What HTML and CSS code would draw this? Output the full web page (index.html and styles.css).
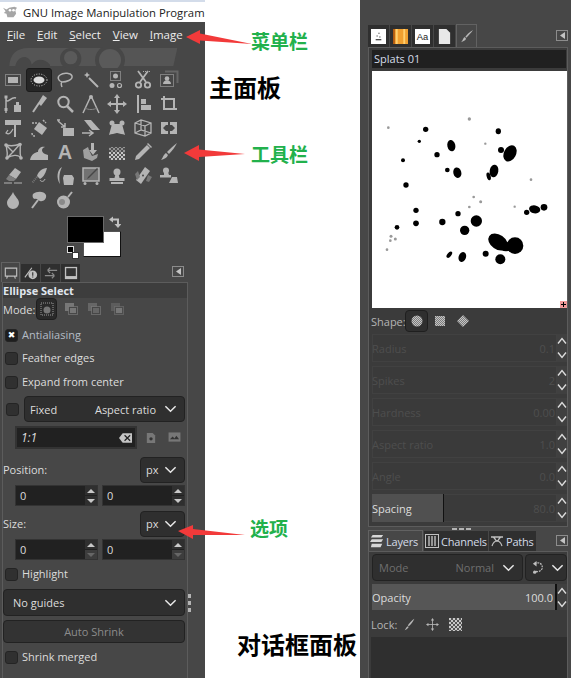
FILE: index.html
```html
<!DOCTYPE html>
<html lang="en">
<head>
  <meta charset="UTF-8">
  <meta name="viewport" content="width=device-width, initial-scale=1.0">
  <title>GIMP windows</title>
  <link rel="stylesheet" href="styles.css">
</head>
<body>
  <svg class="defs" width="0" height="0">
    <defs>
      <pattern id="check" width="4" height="4" patternUnits="userSpaceOnUse">
        <rect width="4" height="4" fill="#555"/>
        <rect width="2" height="2" fill="#c8c8c8"/>
        <rect x="2" y="2" width="2" height="2" fill="#c8c8c8"/>
      </pattern>
      <pattern id="fine" width="2" height="2" patternUnits="userSpaceOnUse">
        <rect width="2" height="2" fill="#7c7c7c"/>
        <rect width="1" height="1" fill="#c4c4c4"/>
        <rect x="1" y="1" width="1" height="1" fill="#c4c4c4"/>
      </pattern>
      <symbol id="chev" viewBox="0 0 14 8"><path d="M1.5 1 7 6.5 12.5 1" fill="none" stroke="#e8e8e8" stroke-width="1.6"/></symbol>
      <symbol id="up" viewBox="0 0 10 8"><path d="M1 6.5 5 1.5 9 6.5" fill="none" stroke="#dcdcdc" stroke-width="1.4"/></symbol>
      <symbol id="down" viewBox="0 0 10 8"><path d="M1 1.5 5 6.5 9 1.5" fill="none" stroke="#dcdcdc" stroke-width="1.4"/></symbol>
      <symbol id="dockmenu" viewBox="0 0 12 11"><rect width="12" height="11" fill="#8c8c8c"/><rect x="1" y="1" width="10" height="9" fill="#474747"/><path d="M9 2v7L4 5.5z" fill="#c4c4c4"/></symbol>
    </defs>
  </svg>

  <main class="desk">
    <section class="toolbox">
      <div class="strip"></div>
      <div class="titlebar">
        <svg class="wilber" viewBox="0 0 18 16"><path d="M1 3l4 2 3-2 6-1 3 1-2 3 1 4-3 4H6l-1-4-3-1 2-2z" fill="#a6a6a6"/><circle cx="9" cy="6" r="1.5" fill="#fff"/><circle cx="13" cy="6" r="1.5" fill="#fff"/></svg>
        <span>GNU Image Manipulation Program</span>
      </div>
      <nav class="menubar">
        <span><u>F</u>ile</span><span><u>E</u>dit</span><span><u>S</u>elect</span><span><u>V</u>iew</span><span><u>I</u>mage</span>
      </nav>
      <div class="logo">
        <!-- faint wilber behind the tool grid -->
        <svg viewBox="0 9 570 63">
          <path d="M28 66C30 30 50 12 85 12H532L520 66z" fill="#555"/>
          <path d="M45 72C50 30 90 30 95 62 110 40 135 45 150 62V72z" fill="#474747"/>
          <circle cx="212" cy="44" r="32" fill="#474747"/>
          <circle cx="212" cy="41" r="20" fill="#5a5a5a"/>
          <circle cx="330" cy="48" r="45" fill="#474747"/>
          <circle cx="330" cy="48" r="33" fill="#5a5a5a"/>
        </svg>
      </div>
      <div class="tools">
        <div class="tool"><svg viewBox="0 0 20 20"><rect x="2.5" y="4.5" width="15" height="11" fill="none" stroke="#bbb" stroke-dasharray="1 1"/><rect x="5" y="7" width="10" height="6"/></svg></div>
        <div class="tool on"><svg viewBox="0 0 20 20"><ellipse cx="10" cy="10" rx="8" ry="6" fill="none" stroke="#ccc" stroke-dasharray="1 1.5"/><ellipse cx="10" cy="10" rx="5.5" ry="3.5" fill="#ddd"/></svg></div>
        <div class="tool"><svg viewBox="0 0 20 20"><path d="M7 12c-4-1-5-5-2-7 4-3 11-2 12 1 1 4-6 6-10 6-1 0-1 3 0 5" fill="none" stroke="#b4b4b4" stroke-width="1.5"/></svg></div>
        <div class="tool"><svg viewBox="0 0 20 20"><path d="M8 8l9 9" stroke="#b4b4b4" stroke-width="2"/><path d="M6 2l1 2 2 1-2 1-1 2-1-2-2-1 2-1z"/></svg></div>
        <div class="tool"><svg viewBox="0 0 20 20"><rect x="3.5" y="1.5" width="10" height="9" fill="none" stroke="#bbb" stroke-dasharray="1 1"/><circle cx="8.5" cy="6" r="2.5"/><circle cx="5" cy="15.5" r="2.5"/><circle cx="12.5" cy="15.5" r="2" fill="none" stroke="#b4b4b4" stroke-width="1.2"/></svg></div>
        <div class="tool"><svg viewBox="0 0 20 20"><path d="M5 1l8 11M15 1L7 12" stroke="#b4b4b4" stroke-width="1.8"/><circle cx="5.5" cy="15" r="2.7" fill="none" stroke="#b4b4b4" stroke-width="1.8"/><circle cx="14.5" cy="15" r="2.7" fill="none" stroke="#b4b4b4" stroke-width="1.8"/><path d="M10 1.5h8" stroke="#aaa" stroke-dasharray="1 1"/></svg></div>
        <div class="tool"><svg viewBox="0 0 20 20"><path d="M6 1.5h12.5V13" fill="none" stroke="#666" stroke-width="2"/><rect x="1.5" y="4.5" width="13" height="12" fill="none" stroke="#bbb" stroke-dasharray="1 1"/><circle cx="8" cy="8.5" r="2.3"/><path d="M4 14c0-5 8-5 8 0z"/></svg></div>

        <div class="tool"><svg viewBox="0 0 20 20"><path d="M3 3v16M3 5c1 6 5-3 10-1" fill="none" stroke="#b4b4b4" stroke-width="1.5"/><rect x="1.5" y="1.5" width="3" height="3"/><rect x="1.5" y="14" width="3" height="3"/><path d="M11 11h7v7h-7zM13 8h3v3h-3z"/></svg></div>
        <div class="tool"><svg viewBox="0 0 20 20"><path d="M14 1l4 3-6 8-3-3z"/><path d="M10 9L4 18" stroke="#b4b4b4" stroke-width="2"/></svg></div>
        <div class="tool"><svg viewBox="0 0 20 20"><circle cx="8.5" cy="8" r="5.2" fill="none" stroke="#b4b4b4" stroke-width="2"/><path d="M12 12l6 6" stroke="#b4b4b4" stroke-width="2.5"/></svg></div>
        <div class="tool"><svg viewBox="0 0 20 20"><circle cx="10" cy="3" r="2"/><path d="M9 4L2 19M11 4l7 15" stroke="#b4b4b4" stroke-width="1.5"/><path d="M4 14c3 2 9 2 12 0" fill="none" stroke="#888"/></svg></div>
        <div class="tool"><svg viewBox="0 0 20 20"><path d="M10 2v16M2 10h16" stroke="#b4b4b4" stroke-width="2"/><path d="M10 0l3 4H7zM10 20l-3-4h6zM0 10l4-3v6zM20 10l-4 3V7z"/></svg></div>
        <div class="tool"><svg viewBox="0 0 20 20"><path d="M4 1h2v18H4zM8 5h5v5H8zM8 11h10v5H8z"/></svg></div>
        <div class="tool"><svg viewBox="0 0 20 20"><path d="M5 2v13h13" fill="none" stroke="#b4b4b4" stroke-width="2"/><path d="M2 5h13v10" fill="none" stroke="#b4b4b4" stroke-width="2"/></svg></div>

        <div class="tool"><svg viewBox="0 0 20 20"><path d="M2 2h16v5h-5v12h-2V7H2z"/><path d="M3 15c3 2 5 0 7-4M5 12l-2 3 3 1" fill="none" stroke="#b4b4b4" stroke-width="1.2"/></svg></div>
        <div class="tool"><svg viewBox="0 0 20 20"><path d="M10 4l8 6-5 7-8-6z"/><path d="M3 5h5M14 2l3 3M3 15c0 2 1 3 3 3" fill="none" stroke="#b4b4b4" stroke-width="1.5" stroke-dasharray="2 1"/></svg></div>
        <div class="tool"><svg viewBox="0 0 20 20"><path d="M8 10h11v8H8z"/><path d="M2 2h3M3 3l7 6M10 5v4H6" fill="none" stroke="#b4b4b4" stroke-width="1.5"/></svg></div>
        <div class="tool"><svg viewBox="0 0 20 20"><path d="M3 2h7l9 10H11z"/><path d="M1 15h10M8 12l4 3-4 3" fill="none" stroke="#b4b4b4" stroke-width="1.5"/></svg></div>
        <div class="tool"><svg viewBox="0 0 20 20"><path d="M5 6h10l3 11c-5-2-11-2-16 0z"/><circle cx="5" cy="5" r="2.5"/><circle cx="15" cy="5" r="2.5"/><circle cx="10" cy="17" r="2" fill="#474747"/></svg></div>
        <div class="tool"><svg viewBox="0 0 20 20"><path d="M2 5l6-3 10 3v10l-6 3L2 15zM2 5l10 3v10M12 8l6-3M8 2v10M2 15l6-3 10 3" fill="none" stroke="#b4b4b4" stroke-width="1.3"/></svg></div>
        <div class="tool"><svg viewBox="0 0 20 20"><path d="M2 4h7v3H7L4 10l3 3h2v3H2zM18 4h-7v3h2l3 3-3 3h-2v3h7z"/></svg></div>

        <div class="tool"><svg viewBox="0 0 20 20"><path d="M3 3c4 1 9 1 14-1 1 5-1 8 1 14-3-4-9-3-14 0 1-5 0-8-1-13zM3 3l7 7-6 6M17 2l-7 8" fill="none" stroke="#b4b4b4" stroke-width="1.4"/><circle cx="3" cy="3" r="1.8"/><circle cx="17" cy="2.5" r="1.8"/><circle cx="4" cy="16" r="1.8"/><circle cx="18" cy="16" r="1.8"/></svg></div>
        <div class="tool"><svg viewBox="0 0 20 20"><path d="M1 18c1-6 6-8 8-8 0-4 4-6 7-5-4 1-4 5 0 7l3 1v5z"/></svg></div>
        <div class="tool tool-a">A</div>
        <div class="tool"><svg viewBox="0 0 20 20"><path d="M10 1h3v7h3l-4 5-4-5h2z"/><path d="M2 8l5-3 1 3 3 6 6-2-1 4-5 3-8-3z" fill="#a0a0a0"/></svg></div>
        <div class="tool"><svg viewBox="0 0 20 20"><rect x="2" y="5" width="16" height="6" fill="url(#check)" opacity=".6"/><rect x="2" y="10" width="16" height="8" fill="url(#check)"/></svg></div>
        <div class="tool"><svg viewBox="0 0 20 20"><path d="M14 3l3 3L6 17l-4 1 1-4z"/><path d="M15 1l4 4-1 1-4-4z"/></svg></div>
        <div class="tool"><svg viewBox="0 0 20 20"><path d="M18 1c-2 4-5 8-8 11l-2-2c3-3 6-6 10-9z"/><path d="M7 11l2 2c-1 3-4 4-7 5 2-2 2-5 5-7z"/></svg></div>

        <div class="tool"><svg viewBox="0 0 20 20"><path d="M12 2l6 4-5 7-7-4z"/><path d="M6 9l7 4-2 2H6l-3-2z" fill="#7d7d7d"/><path d="M1 17h8M11 17h8" stroke="#b4b4b4"/></svg></div>
        <div class="tool"><svg viewBox="0 0 20 20"><path d="M18 2c-5 0-9 4-10 8l3 3c3-2 5-4 7-11z"/><path d="M8 11l-5 6" stroke="#777" stroke-width="2" stroke-dasharray="1 1"/><path d="M11 14c1 2 4 2 5-1" fill="none" stroke="#b4b4b4"/></svg></div>
        <div class="tool"><svg viewBox="0 0 20 20"><path d="M7 1C2 4 1 12 5 18 4 12 4 7 7 1z"/><path d="M9 9h8l2 3-1 7H9l-1-7z"/></svg></div>
        <div class="tool"><svg viewBox="0 0 20 20"><path d="M2 2h16v13H2z" fill="none" stroke="#b4b4b4" stroke-width="1.5"/><path d="M2 2h16v13H2z" opacity=".4"/><path d="M17 3L8 12l-2 1 1-2 9-9z" fill="#474747"/><circle cx="4" cy="17.5" r="1.5"/><circle cx="16" cy="17.5" r="1.5"/></svg></div>
        <div class="tool"><svg viewBox="0 0 20 20"><circle cx="10" cy="6" r="3.5"/><path d="M8.5 8h3l1 4h5v3h-15v-3h5zM4 16h12v2H4z"/></svg></div>
        <div class="tool"><svg viewBox="0 0 20 20"><path d="M12 1l5 4-9 13-5-4z"/><path d="M2 8l3-3 2 6-3 3zM15 9l4 2-3 5-3-1z" fill="#777"/><circle cx="10" cy="9.5" r="1" fill="#474747"/></svg></div>
        <div class="tool"><svg viewBox="0 0 20 20"><circle cx="7" cy="4.5" r="3"/><path d="M5 6h4l1 3h2v2.5H1V9h4zM10 17l3-6h5l1 6z"/></svg></div>

        <div class="tool"><svg viewBox="0 0 20 20"><path d="M10 2c2 5 6 7 6 11a6 6 0 0 1-12 0c0-4 4-6 6-11z"/></svg></div>
        <div class="tool"><svg viewBox="0 0 20 20"><path d="M4 4c4-3 11-3 13 1 1 4-3 7-6 6-2 0-3-3-5-2-2 0-3-3-2-5z"/><path d="M9 10l-6 8" stroke="#b4b4b4" stroke-width="2"/></svg></div>
        <div class="tool"><svg viewBox="0 0 20 20"><circle cx="8.5" cy="12" r="6.5"/><path d="M13 7l4-5" stroke="#b4b4b4" stroke-width="2"/><circle cx="7" cy="12" r="3" fill="#8a8a8a"/></svg></div>
      </div>

      <div class="colors">
        <div class="swatches">
          <div class="bg-color"></div>
          <div class="fg-color"></div>
          <svg class="swap" viewBox="0 0 12 12"><path d="M3 3.5h6V8" fill="none" stroke="#c0c0c0" stroke-width="2"/><path d="M0 3.5 4 .5v6zM9 12 5.5 8h7z" fill="#c0c0c0"/></svg>
          <div class="mini-fg"></div>
          <div class="mini-bg"></div>
        </div>
      </div>

      <div class="tabs">
        <div class="tab active"><svg viewBox="0 0 16 16"><path d="M1.5 2.5h13v9h-13zM4 11.5l-1 3M12 11.5l1 3" fill="none" stroke="#c0c0c0" stroke-width="1.3"/></svg></div>
        <div class="tab"><svg viewBox="0 0 16 16"><path d="M1 13L9 2" stroke="#c0c0c0" stroke-width="1.3"/><circle cx="10" cy="10" r="5" fill="#c0c0c0"/><path d="M10 7v4M10 12v1" stroke="#333" stroke-width="1.3"/></svg></div>
        <div class="tab"><svg viewBox="0 0 16 16"><path d="M15 5H4M4 5l3-3M4 5l3 3M1 11h11M12 11l-3-3M12 11l-3 3" fill="none" stroke="#8a8a8a" stroke-width="1.4"/></svg></div>
        <div class="tab"><svg viewBox="0 0 16 16"><rect x="1" y="1" width="14" height="14" fill="#c0c0c0"/><rect x="2.5" y="2.5" width="11" height="9" fill="#333"/></svg></div>
        <svg class="dock-btn"><use href="#dockmenu"/></svg>
      </div>

      <section class="options">
        <h4 class="opt-title">Ellipse Select</h4>
        <div class="mode-row">
          <span>Mode:</span>
          <div class="mode-btn on"><svg viewBox="0 0 14 14"><rect x="1" y="1" width="12" height="12" fill="none" stroke="#999" stroke-dasharray="1 1"/><circle cx="7" cy="8" r="3.5" fill="#777"/></svg></div>
          <div class="mode-btn"><svg viewBox="0 0 14 14"><rect x="1" y="1" width="9" height="8" fill="#777"/><rect x="4.5" y="4.5" width="9" height="8" fill="#474747" stroke="#8c8c8c" stroke-dasharray="1 1"/><rect x="6" y="6" width="6" height="5" fill="#777"/></svg></div>
          <div class="mode-btn"><svg viewBox="0 0 14 14"><rect x="1" y="1" width="9" height="8" fill="#666"/><rect x="4.5" y="4.5" width="9" height="8" fill="#474747" stroke="#8c8c8c" stroke-dasharray="1 1"/><rect x="6" y="6" width="6" height="5" fill="#666"/></svg></div>
          <div class="mode-btn"><svg viewBox="0 0 14 14"><rect x="1" y="1" width="9" height="8" fill="#5c5c5c"/><rect x="4.5" y="4.5" width="9" height="8" fill="#4c4c4c" stroke="#7a7a7a" stroke-dasharray="1 1"/><rect x="6" y="6" width="6" height="5" fill="#777"/></svg></div>
        </div>

        <label class="check-row first"><span class="check marked">✖</span><span class="dim">Antialiasing</span></label>
        <label class="check-row feather"><span class="check"></span>Feather edges</label>
        <label class="check-row expand"><span class="check"></span>Expand from center</label>

        <div class="fixed-row">
          <span class="check"></span>
          <div class="combo grow"><span>Fixed</span><span class="right">Aspect ratio</span><svg class="chev"><use href="#chev"/></svg></div>
        </div>

        <div class="ratio-row">
          <div class="entry">
            <em>1:1</em>
            <svg class="clear" viewBox="0 0 14 10"><path d="M4 0h10v10H4L0 5z" fill="#c4c4c4"/><path d="M6 2l6 6M12 2L6 8" stroke="#222" stroke-width="1.3"/></svg>
          </div>
          <svg class="mini-ico" viewBox="0 0 12 14"><path d="M1 1h7l3 3v9H1z" fill="#777"/><circle cx="6" cy="8" r="2" fill="#333"/></svg>
          <svg class="mini-ico wide" viewBox="0 0 14 12"><rect x=".5" y=".5" width="13" height="10" fill="#777"/><path d="M2 8l3-3 2 2 2-3 3 4z" fill="#333"/></svg>
        </div>

        <div class="unit-row"><span>Position:</span><div class="combo unit">px<svg class="chev"><use href="#chev"/></svg></div></div>
        <div class="spin-row">
          <div class="spin"><span>0</span><div class="steps"><i class="up"></i><i class="dn"></i></div></div>
          <div class="spin"><span>0</span><div class="steps"><i class="up"></i><i class="dn"></i></div></div>
        </div>
        <div class="unit-row size"><span>Size:</span><div class="combo unit">px<svg class="chev"><use href="#chev"/></svg></div></div>
        <div class="spin-row">
          <div class="spin"><span>0</span><div class="steps"><i class="up"></i><i class="dn off"></i></div></div>
          <div class="spin"><span>0</span><div class="steps"><i class="up"></i><i class="dn off"></i></div></div>
        </div>

        <label class="check-row hl"><span class="check"></span>Highlight</label>
        <div class="combo guides">No guides<svg class="chev"><use href="#chev"/></svg></div>
        <button class="shrink" type="button">Auto Shrink</button>
        <label class="check-row merged"><span class="check"></span>Shrink merged</label>
      </section>
    </section>

    <div class="pane-grip"><i></i><i></i><i></i></div>

    <section class="docks">
      <div class="strip right"></div>
      <div class="tabs top">
        <div class="tab thumb"><svg viewBox="0 0 16 16"><rect width="16" height="16" fill="#fff"/><path d="M8 4h1v1H8zM6 7h1v1H6zM9 8h1v1H9zM5 11h6v1H5z" fill="#111"/></svg></div>
        <div class="tab thumb"><svg viewBox="0 0 16 16"><rect width="16" height="16" fill="#f0a030"/><path d="M3 0h2v16H3zM11 0h2v16h-2z" fill="#ffd070"/><path d="M0 0h2v16H0z" fill="#b05a10"/></svg></div>
        <div class="tab thumb"><svg viewBox="0 0 16 16"><rect width="16" height="16" fill="#fff"/><text class="aa" x="8" y="12" text-anchor="middle">Aa</text></svg></div>
        <div class="tab thumb"><svg viewBox="0 0 16 16"><path d="M2 0h8l4 4v12H2z" fill="#e8e8e8"/></svg></div>
        <div class="tab active wide"><svg viewBox="0 0 16 16"><path d="M15 1C12 5 9 8 7 10L6 9c2-3 5-6 9-8z" fill="#b8b8b8"/><path d="M5 9l2 2c-1 2-3 3-6 4 2-1 2-4 4-6z" fill="#b8b8b8"/></svg></div>
        <svg class="dock-btn"><use href="#dockmenu"/></svg>
      </div>

      <section class="dock brushes">
        <div class="name-entry">Splats 01</div>
        <div class="preview">
          <svg viewBox="36 213 585 711">
            <g fill="#999">
              <circle cx="85" cy="383" r="4"/><circle cx="328" cy="357" r="5"/><circle cx="376" cy="431" r="3.5"/><circle cx="513" cy="539" r="4"/><circle cx="341" cy="591" r="4"/><circle cx="362" cy="605" r="4.5"/><circle cx="328" cy="621" r="4"/><circle cx="464" cy="620" r="3.5"/><circle cx="93" cy="709" r="4.5"/><circle cx="106" cy="717" r="4.5"/><circle cx="91" cy="722" r="4"/><circle cx="81" cy="749" r="4"/>
            </g>
            <g fill="#000">
              <circle cx="197" cy="388" r="8"/><ellipse cx="415" cy="394" rx="8" ry="9"/><circle cx="178" cy="424" r="5"/><ellipse cx="274" cy="437" rx="12" ry="17" transform="rotate(-12 274 437)"/><circle cx="231" cy="464" r="8"/><circle cx="129" cy="481" r="6"/><circle cx="423" cy="450" r="9"/><ellipse cx="450" cy="460" rx="18" ry="26" transform="rotate(28 450 460)"/><circle cx="262" cy="510" r="7"/><ellipse cx="292" cy="518" rx="12" ry="16" transform="rotate(-15 292 518)"/><ellipse cx="402" cy="513" rx="13" ry="19" transform="rotate(10 402 513)"/><ellipse cx="386" cy="529" rx="6" ry="12" transform="rotate(-15 386 529)"/><circle cx="138" cy="555" r="8"/><circle cx="168" cy="631" r="8"/><circle cx="168" cy="670" r="8.5"/><circle cx="111" cy="682" r="7"/><circle cx="247" cy="666" r="9.5"/><circle cx="294" cy="641" r="8"/><circle cx="349" cy="663" r="17"/><circle cx="314" cy="691" r="14"/><circle cx="500" cy="637" r="8"/><ellipse cx="524" cy="628" rx="17" ry="12" transform="rotate(10 524 628)"/><circle cx="552" cy="622" r="10"/><circle cx="377" cy="761" r="9"/><circle cx="421" cy="778" r="15"/><ellipse cx="268" cy="764" rx="6" ry="11" transform="rotate(40 268 764)"/><ellipse cx="307" cy="771" rx="11" ry="15" transform="rotate(20 307 771)"/>
              <ellipse cx="414" cy="726" rx="32" ry="22" transform="rotate(35 414 726)"/><circle cx="465" cy="737" r="25"/><ellipse cx="438" cy="740" rx="20" ry="14"/>
            </g>
          </svg>
          <svg class="corner" viewBox="0 0 7 7"><rect width="7" height="7" fill="#f29a9a"/><path d="M1 3.5h5M3.5 1v5" stroke="#000"/></svg>
        </div>

        <div class="shape-row">
          <span>Shape:</span>
          <div class="shape on"><svg viewBox="0 0 12 12"><circle cx="6" cy="6" r="5.5" fill="url(#fine)"/></svg></div>
          <div class="shape"><svg viewBox="0 0 12 12"><rect x="1" y="1" width="10" height="10" fill="url(#fine)"/></svg></div>
          <div class="shape"><svg viewBox="0 0 12 12"><path d="M6 0l6 6-6 6-6-6z" fill="url(#fine)"/></svg></div>
        </div>

        <div class="scale-row off"><div class="scale"><span>Radius</span><span>0.1</span></div><div class="updown"><svg><use href="#up"/></svg><svg><use href="#down"/></svg></div></div>
        <div class="scale-row off"><div class="scale"><span>Spikes</span><span>2</span></div><div class="updown"><svg><use href="#up"/></svg><svg><use href="#down"/></svg></div></div>
        <div class="scale-row off"><div class="scale"><span>Hardness</span><span>0.00</span></div><div class="updown"><svg><use href="#up"/></svg><svg><use href="#down"/></svg></div></div>
        <div class="scale-row off"><div class="scale"><span>Aspect ratio</span><span>1.0</span></div><div class="updown"><svg><use href="#up"/></svg><svg><use href="#down"/></svg></div></div>
        <div class="scale-row off"><div class="scale"><span>Angle</span><span>0.0</span></div><div class="updown"><svg><use href="#up"/></svg><svg><use href="#down"/></svg></div></div>
        <div class="scale-row spacing">
          <div class="scale"><div class="fill"></div><span class="over">Spacing</span><span class="faint">80.0</span></div>
          <div class="updown"><svg><use href="#up"/></svg><svg><use href="#down"/></svg></div>
        </div>
      </section>

      <div class="handle"><i></i><i></i><i></i></div>

      <div class="tabs lower">
        <div class="tab active label"><svg viewBox="0 0 16 16"><path d="M3 1h12l-2 3H1zM2 6h13l-2 3H0zM2 11h12l-2 4H1z" fill="#d8d8d8"/></svg>Layers</div>
        <div class="tab label channels"><svg viewBox="0 0 14 14"><rect x=".5" y=".5" width="13" height="13" fill="none" stroke="#c0c0c0"/><path d="M4 2v10M7 2v10M10 2v10" stroke="#c0c0c0" stroke-width="1.4"/></svg>Channels</div>
        <div class="tab label paths"><svg viewBox="0 0 14 12"><path d="M1 2h12M3 2c2 0 2 4 4 4s2-4 4-4" fill="none" stroke="#c0c0c0" stroke-width="1.5"/><path d="M7 6C4 6 3 8 2 11M7 6c3 0 4 2 5 5" fill="none" stroke="#c0c0c0" stroke-width="1.2"/></svg>Paths</div>
        <svg class="dock-btn"><use href="#dockmenu"/></svg>
      </div>

      <section class="dock layers">
        <div class="layer-top">
          <div class="combo mode"><span class="gray">Mode</span><span class="right gray">Normal</span><svg class="chev"><use href="#chev"/></svg></div>
          <div class="combo reset"><svg class="undo" viewBox="0 0 14 14"><path d="M4 3c5-3 9 1 8 5-1 3-5 4-7 3" fill="none" stroke="#c0c0c0" stroke-width="1.3" stroke-dasharray="2 1"/><path d="M6 0v6L2 3z" fill="#c0c0c0"/><circle cx="4" cy="12" r="1.8" fill="#c0c0c0"/></svg><svg class="chev"><use href="#chev"/></svg></div>
        </div>
        <div class="scale-row opacity">
          <div class="scale"><span>Opacity</span><span>100.0</span></div>
          <div class="updown"><svg><use href="#up"/></svg><svg><use href="#down"/></svg></div>
        </div>
        <div class="lock-row">
          <span>Lock:</span>
          <svg viewBox="0 0 16 16"><path d="M14 1c-2 4-4 7-7 9l-1-1c2-3 5-6 8-8z" fill="#b8b8b8"/><path d="M6 10l1 1c-1 2-3 3-5 4 1-1 2-4 4-5z" fill="#b8b8b8"/></svg>
          <svg viewBox="0 0 16 16"><path d="M8 2v12M2 8h12" stroke="#b8b8b8"/><path d="M8 0l2 3H6zM8 16l-2-3h4zM0 8l3-2v4zM16 8l-3 2V6z" fill="#b8b8b8"/></svg>
          <svg viewBox="0 0 13 13"><rect width="13" height="13" fill="url(#check)"/></svg>
        </div>
        <div class="layer-list"></div>
      </section>
    </section>
  </main>

  <!-- annotations drawn over the screenshot -->
  <svg class="arrows" viewBox="0 0 571 678">
    <path d="M186 37 200 30 200 33.5 252 44 200 40.5 200 44z"/>
    <path d="M184 153 199 145 199 149.5 245 154 199 157 199 161z"/>
    <path d="M178 531 193 525 193 529 245 535 193 535 193 539z"/>
  </svg>
  <div class="note green menu-note">菜单栏</div>
  <div class="note green tool-note">工具栏</div>
  <div class="note green opt-note">选项</div>
  <div class="note black main-note">主面板</div>
  <div class="note black dialog-note">对话框面板</div>
</body>
</html>
```

FILE: styles.css
```css
/* GIMP windows on white, with annotations */
* {
  box-sizing: border-box;
}
body {
  margin: 0;
  width: 571px;
  height: 678px;
  position: relative;
  overflow: hidden;
  background: #fff;
  font-family: "Open Sans", "Noto Sans", sans-serif;
  font-size: 11px;
  color: #dcdcdc;
}
.defs {
  position: absolute;
}
.desk {
  display: flex;
  height: 678px;
}
svg {
  display: block;
  flex: none;
}

/* left window */
.toolbox {
  width: 205px;
  display: flex;
  flex-direction: column;
  background: #474747;
}
.strip {
  height: 2px;
  background: #d3dcea;
}
.strip.right {
  height: 3px;
  margin-right: 6px;
}
.titlebar {
  height: 20px;
  background: #fff;
  color: #222;
  font-size: 11.3px;
  display: flex;
  align-items: center;
  gap: 5px;
  padding-left: 2px;
  white-space: nowrap;
}
.wilber {
  width: 16px;
  height: 14px;
}
.menubar {
  height: 25px;
  display: flex;
  align-items: center;
  padding-left: 7px;
  gap: 11.8px;
  color: #ececec;
  font-size: 11.5px;
}
.logo {
  height: 21px;
}
.logo svg {
  width: 190px;
  height: 21px;
}
.tools {
  height: 144px;
  display: grid;
  grid-template-columns: repeat(7, 26px);
  grid-auto-rows: 24px;
}
.tool {
  display: flex;
  align-items: center;
  justify-content: center;
  fill: #b4b4b4;
}
.tool svg {
  width: 20px;
  height: 20px;
}
.tool.on {
  background: #262626;
  border: 1px solid #1c1c1c;
  border-radius: 3px;
}
.tool-a {
  font-family: "Liberation Sans", sans-serif;
  font-weight: 700;
  font-size: 20px;
  line-height: 24px;
  color: #b4b4b4;
}
.aa {
  font-family: "Liberation Sans", sans-serif;
  font-size: 10px;
  fill: #222;
}
.colors {
  height: 50px;
  padding: 4px 0 0 67px;
}
.swatches {
  width: 60px;
  height: 44px;
  position: relative;
}
.fg-color {
  position: absolute;
  left: 0;
  top: 0;
  width: 37px;
  height: 27px;
  background: #000;
  border: 1px solid #6a6a6a;
}
.bg-color {
  position: absolute;
  left: 16px;
  top: 15px;
  width: 38px;
  height: 26px;
  background: #fff;
  border: 1px solid #111;
  border-top-color: #555;
  border-left-color: #555;
}
.swap {
  position: absolute;
  left: 42px;
  top: 0;
  width: 12px;
  height: 12px;
}
.mini-fg {
  position: absolute;
  left: 0;
  top: 30px;
  width: 7px;
  height: 7px;
  background: #000;
  border: 1px solid #ddd;
}
.mini-bg {
  position: absolute;
  left: 5px;
  top: 36px;
  width: 7px;
  height: 7px;
  background: #fff;
  border: 1px solid #333;
}

/* dock tabs */
.tabs {
  height: 20px;
  display: flex;
  align-items: flex-end;
  padding-left: 1px;
}
.tab {
  height: 18px;
  width: 19px;
  background: #2f2f2f;
  display: flex;
  align-items: center;
  justify-content: center;
  gap: 2px;
  margin-right: 1px;
}
.tab svg {
  width: 14px;
  height: 14px;
}
.tab.active {
  height: 20px;
  background: #474747;
  border: 1px solid #626262;
  border-bottom: none;
}
.dock-btn {
  width: 12px;
  height: 11px;
  margin: 0 0 5px auto;
}
.tabs .dock-btn {
  margin-right: 21px;
}

/* tool options */
.options {
  flex: 1;
  margin-left: 2px;
  width: 186px;
  padding: 0 1px 0 0;
  border: 1px solid #5c5c5c;
  border-bottom: none;
  display: flex;
  flex-direction: column;
  overflow: hidden;
}
.opt-title {
  margin: 0 -1px 0 0;
  height: 15px;
  line-height: 15px;
  font-size: 11px;
  font-weight: 700;
  color: #e0e6ee;
  background: #3d3d3d;
  padding-left: 0;
}
.mode-row {
  height: 22px;
  display: flex;
  align-items: center;
}
.mode-row span {
  width: 33px;
}
.mode-btn {
  width: 23px;
  height: 22px;
  display: flex;
  align-items: center;
  justify-content: center;
}
.mode-btn.on {
  width: 21px;
  margin-right: 2px;
  background: #2a2a2a;
  border: 1px solid #1f1f1f;
  border-radius: 4px;
}
.mode-btn svg {
  width: 14px;
  height: 14px;
}
.check-row {
  height: 24px;
  display: flex;
  align-items: center;
  gap: 4px;
  padding: 0 0 2px 2px;
}
.check-row .check {
  margin-top: 2px;
}
.check-row.first {
  margin-top: 3px;
}
.check-row.feather {
  height: 23px;
}
.check-row.expand {
  height: 25px;
}
.check {
  width: 13px;
  height: 13px;
  flex: none;
  background: #303030;
  border: 1px solid #242424;
  border-radius: 3px;
  display: flex;
  align-items: center;
  justify-content: center;
  font-size: 9px;
  line-height: 1;
  color: #fff;
  font-family: "DejaVu Sans", sans-serif;
}
.check.marked {
  background: #1e1e1e;
}
.dim {
  color: #b4bcc6;
}
.fixed-row {
  height: 26px;
  margin-top: 1px;
  display: flex;
  align-items: center;
  gap: 5px;
  padding: 0 1px 0 3px;
}
.combo {
  height: 26px;
  display: flex;
  align-items: center;
  background: #2f2f2f;
  border: 1px solid #222;
  border-radius: 4px;
  padding: 0 7px 0 5px;
}
.grow {
  flex: 1;
}
.right {
  margin-left: auto;
  margin-right: 8px;
}
.chev {
  width: 13px;
  height: 8px;
}
.ratio-row {
  height: 23px;
  margin-top: 4px;
  display: flex;
  align-items: center;
  padding-left: 12px;
}
.entry {
  width: 122px;
  height: 23px;
  background: #212121;
  border: 2px solid #333;
  display: flex;
  align-items: center;
  justify-content: space-between;
  padding: 0 3px 0 4px;
  color: #dcdcdc;
  font-size: 12px;
}
.clear {
  width: 13px;
  height: 10px;
}
.mini-ico {
  width: 10px;
  height: 12px;
  margin-left: 9px;
}
.mini-ico.wide {
  width: 13px;
  height: 11px;
  margin-left: 12px;
}
.unit-row {
  height: 27px;
  margin-top: 7px;
  display: flex;
  align-items: center;
  justify-content: space-between;
  padding-right: 1px;
}
.unit-row.size {
  margin-top: 4px;
}
.unit {
  width: 45px;
  justify-content: space-between;
}
.spin-row {
  height: 21px;
  margin-top: 2px;
  display: flex;
  gap: 4px;
  padding: 0 1px 0 12px;
}
.spin {
  flex: 1;
  display: flex;
  background: #212121;
  border: 1px solid #333;
  justify-content: space-between;
}
.spin span {
  padding-left: 4px;
  line-height: 19px;
}
.steps {
  width: 12px;
  display: flex;
  flex-direction: column;
  gap: 1px;
}
.steps i {
  flex: 1;
  background: #2f2f2f;
  display: flex;
  align-items: center;
  justify-content: center;
}
.steps i::after {
  content: "";
  border-left: 4px solid transparent;
  border-right: 4px solid transparent;
}
.steps .up::after {
  border-bottom: 4px solid #c8c8c8;
}
.steps .dn::after {
  border-top: 4px solid #c8c8c8;
}
.steps .dn.off {
  background: #3d3d3d;
}
.steps .dn.off::after {
  border-top-color: #666;
}
.check-row.hl {
  height: 22px;
  margin-top: 3px;
}
.guides {
  height: 27px;
  margin-top: 4px;
  margin-right: 1px;
  padding-left: 9px;
  justify-content: space-between;
}
.shrink {
  height: 23px;
  margin: 4px 1px 0 0;
  background: #333;
  border: 1px solid #222;
  border-radius: 4px;
  font: inherit;
  color: #8c8c8c;
}
.check-row.merged {
  height: 22px;
  margin-top: 3px;
}

/* grips */
.pane-grip {
  width: 4px;
  height: 18px;
  margin: 594px 0 0 -17px;
  display: flex;
  flex-direction: column;
  justify-content: space-between;
}
.pane-grip i {
  height: 4px;
  width: 3px;
  background: #b4b4b4;
}

/* right window */
.docks {
  width: 211px;
  margin-left: auto;
  background: #474747;
  display: flex;
  flex-direction: column;
}
.tabs.top {
  height: 44px;
  padding-left: 8px;
}
.tabs.top .tab {
  height: 22px;
  width: 21px;
  margin-bottom: 0;
}
.tabs.top .tab.wide {
  height: 23px;
}
.tabs.top .dock-btn {
  margin: 0 3px 6px auto;
}
.tab.thumb svg {
  width: 15px;
  height: 15px;
}
.dock {
  margin: 0 3px 0 8px;
  background: #3b3b3b;
  border: 1px solid #5c5c5c;
  padding: 0 0 0 3px;
}
.brushes {
  height: 480px;
  padding-top: 2px;
}
.name-entry {
  width: 194px;
  height: 18px;
  line-height: 18px;
  background: #202020;
  padding-left: 2px;
  color: #d4dce8;
  font-size: 11px;
}
.preview {
  width: 195px;
  height: 237px;
  margin-top: 3px;
  background: #fff;
  position: relative;
}
.preview > svg:first-child {
  width: 195px;
  height: 237px;
  filter: blur(0.6px);
}
.corner {
  position: absolute;
  right: 0;
  bottom: 0;
  width: 7px;
  height: 7px;
}
.shape-row {
  height: 24px;
  display: flex;
  align-items: center;
  margin-left: -1px;
  padding-top: 2px;
  color: #b4b4b4;
}
.shape-row > span {
  width: 34px;
}
.shape {
  width: 23px;
  height: 22px;
  display: flex;
  align-items: center;
  justify-content: center;
}
.shape.on {
  background: #2f2f2f;
  border: 1px solid #1f1f1f;
  border-radius: 4px;
}
.shape svg {
  width: 12px;
  height: 12px;
}
.scale-row {
  height: 28px;
  margin-top: 4px;
  display: flex;
  width: 195px;
}
.shape-row + .scale-row {
  margin-top: 2px;
}
.scale {
  flex: 1;
  position: relative;
  display: flex;
  align-items: center;
  justify-content: space-between;
  padding: 0 2px 0 0;
  background: #3a3a3a;
  box-shadow: inset 0 0 0 1px #414141;
}
.scale-row.off {
  color: #4e4e4e;
}
.updown {
  width: 10px;
  display: flex;
  flex-direction: column;
  justify-content: space-around;
  background: #404040;
}
.updown svg {
  width: 10px;
  height: 8px;
}
.fill {
  position: absolute;
  left: 0;
  top: 0;
  bottom: 0;
  width: 71px;
  background: #505050;
  border-right: 1px solid #111;
  box-sizing: content-box;
}
.over {
  position: relative;
  color: #dcdcdc;
}
.faint {
  color: #4e4e4e;
  position: relative;
}
.handle {
  height: 3px;
  display: flex;
  justify-content: center;
  gap: 2px;
  padding-right: 8px;
}
.handle i {
  width: 5px;
  height: 2px;
  background: #b4b4b4;
  margin-top: 1px;
}
.tabs.lower {
  height: 21px;
  padding-left: 8px;
}
.tabs.lower .tab.label {
  height: 20px;
  justify-content: flex-start;
  padding: 0 0 0 1px;
  font-size: 11px;
  letter-spacing: -0.2px;
  color: #d4dce8;
  margin-right: 1px;
}
.tabs.lower .tab.active {
  height: 21px;
  width: 55px;
  padding-left: 1px;
}
.tabs.lower .channels {
  width: 64px;
}
.tabs.lower .paths {
  width: 47px;
}
.tabs.lower .dock-btn {
  margin: 0 3px 5px auto;
}
.layers {
  height: 127px;
  padding-top: 2px;
  border-bottom: none;
}
.layer-top {
  display: flex;
  gap: 2px;
  height: 27px;
  width: 195px;
}
.layer-top .combo {
  height: 27px;
}
.mode {
  flex: 1;
  padding-left: 6px;
}
.gray {
  color: #6e6e6e;
}
.reset {
  width: 42px;
  gap: 7px;
}
.undo {
  width: 13px;
  height: 13px;
}
.scale-row.opacity {
  height: 26px;
  margin-top: 3px;
}
.opacity .scale {
  background: #565656;
  box-shadow: none;
  border-right: 2px solid #111;
}
.lock-row {
  height: 20px;
  margin-top: 4px;
  margin-left: -1px;
  display: flex;
  align-items: center;
  color: #b4b4b4;
}
.lock-row span {
  width: 32px;
}
.lock-row svg {
  width: 13px;
  height: 13px;
  margin-right: 10px;
}
.layer-list {
  height: 60px;
  margin: 3px 0 0 -1px;
  width: 196px;
  background: #2f2f2f;
}

/* annotations */
.arrows {
  position: absolute;
  left: 0;
  top: 0;
  width: 571px;
  height: 678px;
  fill: #f23a3a;
}
.note {
  position: absolute;
  font-family: "Noto Sans CJK SC", sans-serif;
  font-weight: 700;
  white-space: nowrap;
}
.green {
  color: #22b14c;
  font-size: 19px;
  line-height: 24px;
}
.black {
  color: #000;
  font-size: 24px;
  line-height: 30px;
}
.menu-note {
  left: 251px;
  top: 29px;
}
.tool-note {
  left: 251px;
  top: 142px;
}
.opt-note {
  left: 250px;
  top: 516px;
}
.main-note {
  left: 209px;
  top: 72px;
}
.dialog-note {
  left: 237px;
  top: 629px;
}
```
